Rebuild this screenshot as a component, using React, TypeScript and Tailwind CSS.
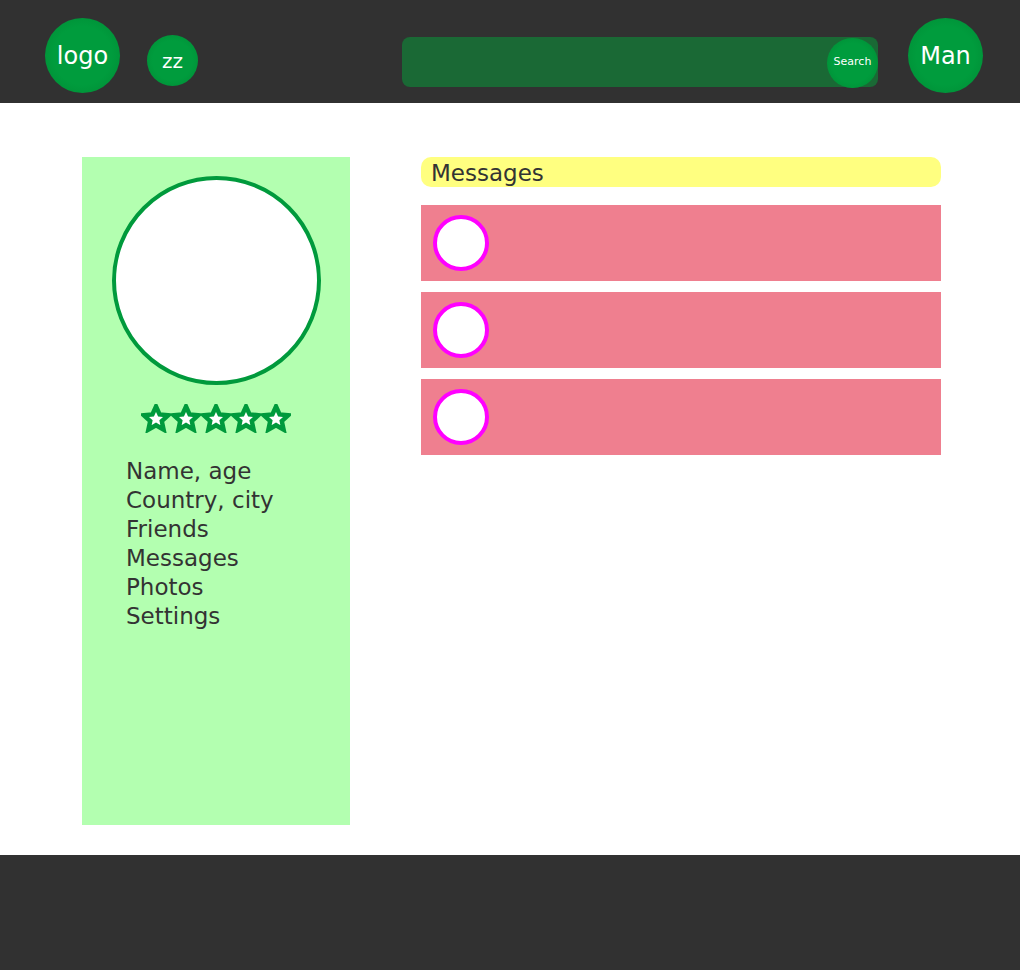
import React from "react";

const font = { fontFamily: '"Century Gothic", "DejaVu Sans", sans-serif' };

function Star() {
  return (
    <svg width="30" height="29" viewBox="0 0 30 29">
      <polygon
        points="15,2.5 18.6,10.4 27.2,11.3 20.8,17.1 22.6,25.6 15,21.2 7.4,25.6 9.2,17.1 2.8,11.3 11.4,10.4"
        fill="#ffffff"
        stroke="#009a3c"
        strokeWidth="4.5"
        strokeLinejoin="miter"
      />
    </svg>
  );
}

function MessageCard() {
  return (
    <div className="h-[76px] bg-[#ef7f8f] flex items-center pl-3">
      <div className="w-[56px] h-[56px] rounded-full bg-white border-4 border-[#ff00ff]" />
    </div>
  );
}

export default function App() {
  const links = ["Name, age", "Country, city", "Friends", "Messages", "Photos", "Settings"];

  return (
    <div className="min-h-screen flex flex-col bg-white" style={font}>
      {/* HEADER */}
      <div className="h-[103px] bg-[#313131] flex items-center pl-[45px] pt-[8px]">
        <div className="shrink-0 w-[75px] h-[75px] rounded-full bg-[radial-gradient(circle,#009c3d_55%,#008833_100%)] flex items-center justify-center text-white text-[24px]">
          logo
        </div>
        <div className="shrink-0 ml-[27px] mt-[10px] w-[51px] h-[51px] rounded-full bg-[radial-gradient(circle,#009c3d_55%,#008833_100%)] flex items-center justify-center text-white text-[20px]">
          zz
        </div>
        <div className="shrink-0 ml-[204px] mt-[12px] w-[476px] h-[50px] rounded-lg bg-[#1a6935] flex justify-end">
          <div className="w-[51px] h-[50px] rounded-full bg-[radial-gradient(circle,#009c3d_55%,#008833_100%)] flex items-center justify-center text-white text-[11px] mt-[1px]">
            Search
          </div>
        </div>
        <div className="shrink-0 ml-[30px] w-[75px] h-[75px] rounded-full bg-[radial-gradient(circle,#009c3d_55%,#008833_100%)] flex items-center justify-center text-white text-[24px]">
          Man
        </div>
      </div>

      {/* MAIN */}
      <div className="h-[752px] flex pt-[54px] pl-[82px]">
        <div className="w-[268px] h-[668px] bg-[#b3ffb0] flex flex-col items-center pt-[19px]">
          <div className="w-[209px] h-[209px] rounded-full bg-white border-4 border-[#009a3c]" />
          <div className="flex mt-[19px] gap-0">
            <Star />
            <Star />
            <Star />
            <Star />
            <Star />
          </div>
          <div className="self-start pl-[44px] mt-[24px] text-[#333333] text-[23px] leading-[29px]">
            {links.map((l) => (
              <div key={l}>{l}</div>
            ))}
          </div>
        </div>

        <div className="ml-[71px] w-[520px] flex flex-col">
          <div className="h-[30px] rounded-[10px] bg-[#ffff80] px-[10px] text-[#333333] text-[23px] leading-[32px]">
            Messages
          </div>
          <div className="mt-[18px] flex flex-col gap-[11px]">
            <MessageCard />
            <MessageCard />
            <MessageCard />
          </div>
        </div>
      </div>

      {/* FOOTER */}
      <div className="h-[115px] bg-[#313131]" />
    </div>
  );
}
